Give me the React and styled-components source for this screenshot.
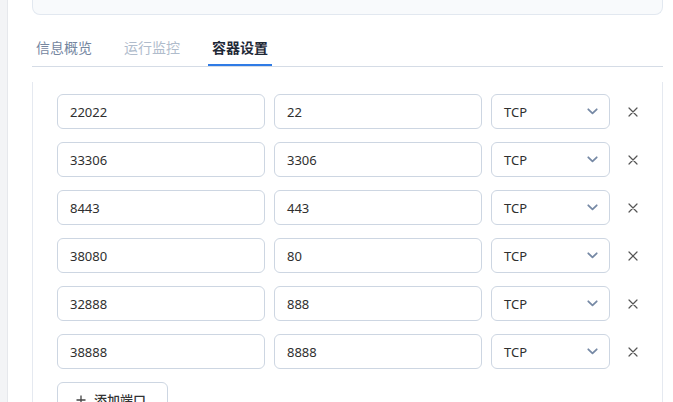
import React from "react";
import styled, { createGlobalStyle } from "styled-components";

const GlobalStyle = createGlobalStyle`
  html, body {
    margin: 0;
    padding: 0;
    background: #ffffff;
    overflow: hidden;
  }
  body {
    font-family: "Noto Sans", "Noto Sans CJK SC", sans-serif;
    color: #333;
  }
`;

const Layout = styled.div`
  display: flex;
  height: 402px;
  overflow: hidden;
`;

const SideStrip = styled.div`
  flex: 0 0 7px;
  background: #f3f4f6;
  border-right: 1px solid #e6e8ec;
`;

const Main = styled.div`
  flex: 1;
  padding: 0 10px 0 24px;
  display: flex;
  flex-direction: column;
  & > * {
    flex-shrink: 0;
  }
`;

const InfoCard = styled.div`
  height: 14px;
  background: #f8fafc;
  border: 1px solid #e2e8f0;
  border-top: none;
  border-radius: 0 0 8px 8px;
`;

const TabBar = styled.div`
  display: flex;
  gap: 24px;
  margin-top: 15px;
  border-bottom: 1px solid #d5dce6;
`;

const Tab = styled.div`
  padding: 8px 4px 6px;
  font-size: 14px;
  line-height: 20px;
  font-weight: ${(p) => (p.$active ? 600 : 400)};
  color: ${(p) => (p.$active ? "#1f2937" : p.$muted ? "#b0bccc" : "#75869f")};
  border-bottom: 2px solid ${(p) => (p.$active ? "#2f7be5" : "transparent")};
`;

const Panel = styled.div`
  margin-top: 15px;
  flex: 1 0 auto;
  border: 1px solid #e5e9f0;
  border-top: none;
  padding: 12px 19px 0 24px;
  display: flex;
  flex-direction: column;
  gap: 13px;
  & > * {
    flex-shrink: 0;
  }
`;

const Row = styled.div`
  display: grid;
  grid-template-columns: 208px 208px 119px 22px;
  column-gap: 9px;
  align-items: center;
`;

const Field = styled.div`
  height: 35px;
  box-sizing: border-box;
  border: 1px solid #cdd6e2;
  border-radius: 6px;
  padding: 0 11px 0 12px;
  display: flex;
  align-items: center;
  justify-content: space-between;
  font-size: 13px;
  color: #2f2f2f;
  background: #fff;
`;

const RemoveButton = styled.div`
  margin-left: 3px;
  width: 22px;
  height: 22px;
  display: flex;
  align-items: center;
  justify-content: center;
  color: #555;
`;

const AddButton = styled.div`
  align-self: flex-start;
  height: 35px;
  box-sizing: border-box;
  width: 111px;
  border: 1px solid #cdd6e2;
  border-radius: 6px;
  display: flex;
  align-items: center;
  gap: 8px;
  padding-left: 18px;
  font-size: 13px;
  font-weight: 500;
  color: #333;
`;

const Chevron = () => (
  <svg width="11" height="7" viewBox="0 0 11 7">
    <path d="M1.3 1.3 L5.5 5.3 L9.7 1.3" fill="none" stroke="#7689a5" strokeWidth="1.8" strokeLinecap="round" strokeLinejoin="round" />
  </svg>
);

const Cross = () => (
  <svg width="10" height="10" viewBox="0 0 10 10">
    <path d="M1 1 L9 9 M9 1 L1 9" stroke="#555" strokeWidth="1.2" strokeLinecap="round" />
  </svg>
);

const Plus = () => (
  <svg width="10" height="10" viewBox="0 0 10 10">
    <path d="M5 0.5 V9.5 M0.5 5 H9.5" stroke="#444" strokeWidth="1.3" />
  </svg>
);

const ports = [
  ["22022", "22"],
  ["33306", "3306"],
  ["8443", "443"],
  ["38080", "80"],
  ["32888", "888"],
  ["38888", "8888"],
];

export default function App() {
  return (
    <Layout>
      <GlobalStyle />
      <SideStrip />
      <Main>
        <InfoCard />
        <TabBar>
          <Tab>信息概览</Tab>
          <Tab $muted>运行监控</Tab>
          <Tab $active>容器设置</Tab>
        </TabBar>
        <Panel>
          {ports.map(([host, container]) => (
            <Row key={host}>
              <Field>{host}</Field>
              <Field>{container}</Field>
              <Field>
                TCP
                <Chevron />
              </Field>
              <RemoveButton>
                <Cross />
              </RemoveButton>
            </Row>
          ))}
          <AddButton>
            <Plus />
            添加端口
          </AddButton>
        </Panel>
      </Main>
    </Layout>
  );
}
